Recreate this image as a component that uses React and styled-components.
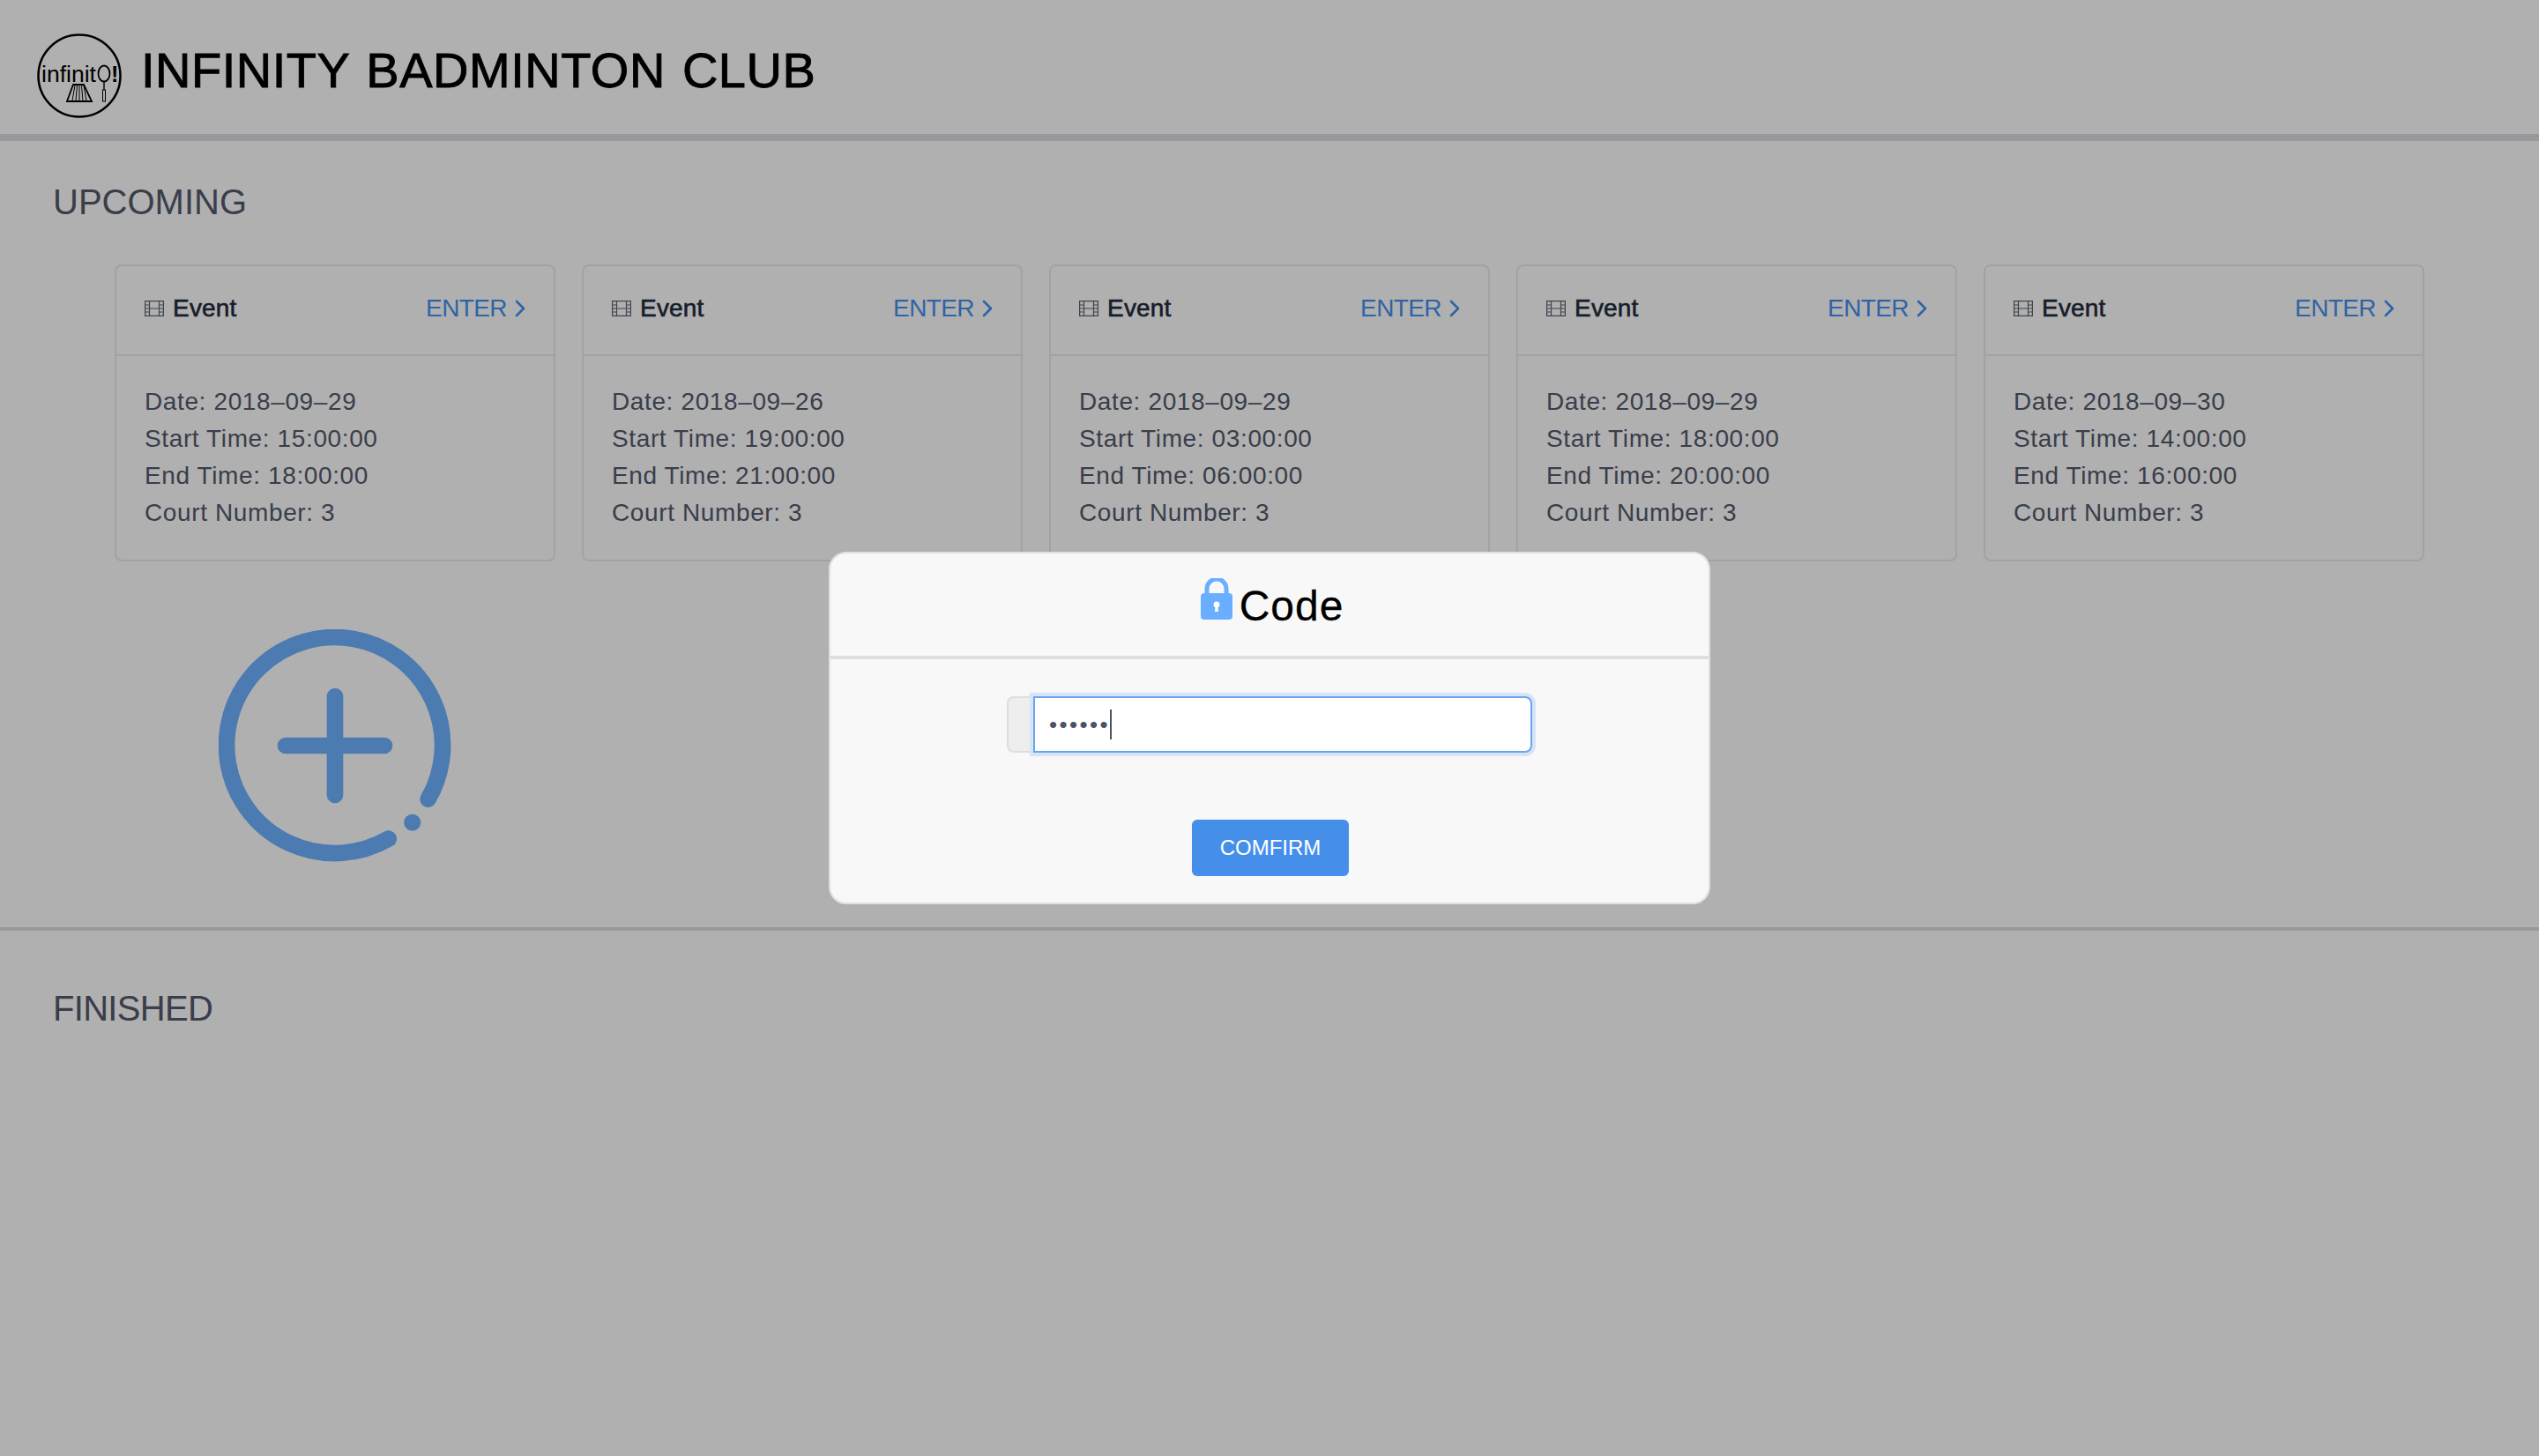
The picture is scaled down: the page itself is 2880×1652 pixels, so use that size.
import React from 'react'
import styled, { createGlobalStyle } from 'styled-components'

const events = [
  { date: '2018–09–29', start: '15:00:00', end: '18:00:00', court: 3 },
  { date: '2018–09–26', start: '19:00:00', end: '21:00:00', court: 3 },
  { date: '2018–09–29', start: '03:00:00', end: '06:00:00', court: 3 },
  { date: '2018–09–29', start: '18:00:00', end: '20:00:00', court: 3 },
  { date: '2018–09–30', start: '14:00:00', end: '16:00:00', court: 3 },
]

const GlobalStyle = createGlobalStyle`
  html, body { margin: 0; padding: 0; }
  body {
    background: #fcfcfc;
    font-family: "Liberation Sans", Arial, sans-serif;
  }
  * { box-sizing: border-box; }
`

const Page = styled.div`
  min-height: 1652px;
`

const Header = styled.header`
  display: flex;
  align-items: flex-start;
  gap: 22px;
  height: 160px;
  padding: 38px 0 0 42px;
  border-bottom: 8px solid #d9dbe0;
`

const Title = styled.h1`
  margin: 14px 0 0;
  font-size: 56px;
  font-weight: 400;
  line-height: 56px;
  letter-spacing: 0.5px;
  word-spacing: 3px;
  color: #000;
  -webkit-text-stroke: 0.9px #000;
`

const Section = styled.section`
  padding: 45px 0 74px 60px;
  border-bottom: 4px solid #d9dbe0;
`

const FinishedSection = styled.section`
  padding: 64px 0 0 60px;
`

const Heading = styled.h2`
  margin: 0;
  font-size: 40px;
  font-weight: 400;
  line-height: 48px;
  letter-spacing: ${p => p.$spacing || 0}px;
  color: #53596c;
`

const CardGrid = styled.div`
  display: flex;
  flex-wrap: wrap;
  gap: 77px 30px;
  margin: 47px 0 0 70px;
  width: 2620px;
`

const Card = styled.article`
  width: 500px;
  border: 2px solid #e9e9e9;
  border-radius: 8px;
`

const CardHeader = styled.div`
  display: flex;
  align-items: center;
  justify-content: space-between;
  height: 102px;
  padding: 0 32px 4px;
  border-bottom: 2px solid #e9e9e9;
`

const CardTitle = styled.div`
  display: flex;
  align-items: center;
  gap: 10px;
  font-size: 28px;
  font-weight: 400;
  letter-spacing: 0.2px;
  color: #222b3b;
  -webkit-text-stroke: 0.6px #222b3b;
`

const EnterLink = styled.a`
  display: flex;
  align-items: center;
  gap: 9px;
  font-size: 28px;
  letter-spacing: -0.6px;
  color: #4390ee;
`

const CardBody = styled.div`
  padding: 31px 32px 32px;
`

const InfoLine = styled.div`
  font-size: 28px;
  line-height: 42px;
  letter-spacing: 0.62px;
  color: #53596c;
`

const AddSlot = styled.div`
  display: flex;
  justify-content: center;
  width: 500px;
`

const Overlay = styled.div`
  position: fixed;
  inset: 0;
  display: flex;
  align-items: center;
  justify-content: center;
  background: rgba(0, 0, 0, 0.3);
`

const Modal = styled.div`
  width: 1000px;
  height: 400px;
  background: #f8f8f8;
  border: 2px solid #e0e0e2;
  border-radius: 20px;
`

const ModalHeader = styled.div`
  display: flex;
  align-items: flex-end;
  justify-content: center;
  gap: 8px;
  height: 120px;
  padding: 0 0 41px 6px;
  border-bottom: 4px solid #dddee0;
`

const ModalTitle = styled.div`
  font-size: 48px;
  line-height: 48px;
  letter-spacing: 1px;
  color: #000;
  margin-bottom: -9px;
  -webkit-text-stroke: 0.3px #000;
`

const ModalBody = styled.div`
  display: flex;
  flex-direction: column;
  align-items: center;
  padding-top: 42px;
`

const InputGroup = styled.div`
  display: flex;
  width: 596px;
  height: 64px;
`

const Prepend = styled.div`
  width: 30px;
  background: #eeeeee;
  border: 2px solid #dedede;
  border-right: 0;
  border-radius: 8px 0 0 8px;
`

const PasswordField = styled.div`
  display: flex;
  align-items: center;
  flex: 1;
  padding-left: 16px;
  background: #fff;
  border: 2px solid #6aa5ef;
  border-radius: 0 8px 8px 0;
  box-shadow: 0 0 0 4px #d6e4f6;
  font-size: 26px;
  letter-spacing: 2.4px;
  color: #4b5263;
`

const Caret = styled.span`
  width: 2px;
  height: 34px;
  background: #4b5263;
`

const ConfirmButton = styled.button`
  width: 178px;
  height: 64px;
  margin: 76px 0 0 2px;
  padding: 0;
  background: #458fea;
  border: 0;
  border-radius: 6px;
  font-family: inherit;
  font-size: 24px;
  color: #fff;
`

const FilmIcon = () => (
  <svg width="22" height="18" viewBox="0 0 22 18" fill="none" stroke="#5a6070" strokeWidth="1.2">
    <rect x="0.6" y="0.6" width="20.8" height="16.8" />
    <path d="M5.5 1v16M16.5 1v16M5.5 9h11M1 5h4.5M1 9h4.5M1 13h4.5M16.5 5H21M16.5 9H21M16.5 13H21" />
  </svg>
)

const Chevron = () => (
  <svg width="12" height="20" viewBox="0 0 12 20" fill="none" stroke="#4390ee" strokeWidth="2.6" strokeLinecap="round" strokeLinejoin="round">
    <path d="M2 2l8 8-8 8" />
  </svg>
)

const Logo = () => (
  <svg width="96" height="96" viewBox="0 0 96 96" fill="none" stroke="#000">
    <circle cx="48" cy="48" r="46.5" strokeWidth="2.5" />
    <text x="5" y="55" fontFamily="Liberation Sans, sans-serif" fontSize="25" fill="#000" stroke="none" textLength="62" lengthAdjust="spacingAndGlyphs">infinit</text>
    <ellipse cx="76" cy="45.5" rx="6.5" ry="9" strokeWidth="1.8" />
    <path d="M76 55v9" strokeWidth="1.4" />
    <rect x="74.5" y="64" width="3" height="13" strokeWidth="1" />
    <text x="84" y="55" fontFamily="Liberation Sans, sans-serif" fontSize="25" fontWeight="700" fill="#000" stroke="none">!</text>
    <path d="M41 58h12l9 19H34z" strokeWidth="1.8" />
    <path d="M43 59l-3 17M45.5 59l-1.5 17M48 59v17M50.5 59l1.5 17M53 59l3 17" strokeWidth="1" />
    <path d="M38 77h20" strokeWidth="2" />
  </svg>
)

const AddIcon = () => (
  <svg width="264" height="264" viewBox="0 0 264 264" fill="none" stroke="#6eb1ff" strokeWidth="18.7" strokeLinecap="round">
    <path d="M237.7 192.7A122.5 122.5 0 1 0 192.7 237.7" />
    <path d="M76 132h112M132 76v112" />
    <circle cx="219.7" cy="219.3" r="9.5" fill="#6eb1ff" stroke="none" />
  </svg>
)

const LockIcon = () => (
  <svg width="36" height="47" viewBox="0 0 36 47" fill="#6aaeff">
    <path d="M7 19v-7a11 11 0 0 1 22 0v7" fill="none" stroke="#6aaeff" strokeWidth="5" />
    <rect x="0" y="17" width="36" height="30" rx="4" />
    <circle cx="18" cy="30" r="3.4" fill="#fff" />
    <path d="M16.6 31h2.8l.6 7h-4z" fill="#fff" />
  </svg>
)

export default function App() {
  return (
    <Page>
      <GlobalStyle />
      <Header>
        <Logo />
        <Title>INFINITY BADMINTON CLUB</Title>
      </Header>

      <Section>
        <Heading>UPCOMING</Heading>
        <CardGrid>
          {events.map((ev, i) => (
            <Card key={i}>
              <CardHeader>
                <CardTitle>
                  <FilmIcon />
                  Event
                </CardTitle>
                <EnterLink>
                  ENTER
                  <Chevron />
                </EnterLink>
              </CardHeader>
              <CardBody>
                <InfoLine>Date: {ev.date}</InfoLine>
                <InfoLine>Start Time: {ev.start}</InfoLine>
                <InfoLine>End Time: {ev.end}</InfoLine>
                <InfoLine>Court Number: {ev.court}</InfoLine>
              </CardBody>
            </Card>
          ))}
          <AddSlot>
            <AddIcon />
          </AddSlot>
        </CardGrid>
      </Section>

      <FinishedSection>
        <Heading $spacing={-0.7}>FINISHED</Heading>
      </FinishedSection>

      <Overlay>
        <Modal>
          <ModalHeader>
            <LockIcon />
            <ModalTitle>Code</ModalTitle>
          </ModalHeader>
          <ModalBody>
            <InputGroup>
              <Prepend />
              <PasswordField>
                ••••••
                <Caret />
              </PasswordField>
            </InputGroup>
            <ConfirmButton>COMFIRM</ConfirmButton>
          </ModalBody>
        </Modal>
      </Overlay>
    </Page>
  )
}
